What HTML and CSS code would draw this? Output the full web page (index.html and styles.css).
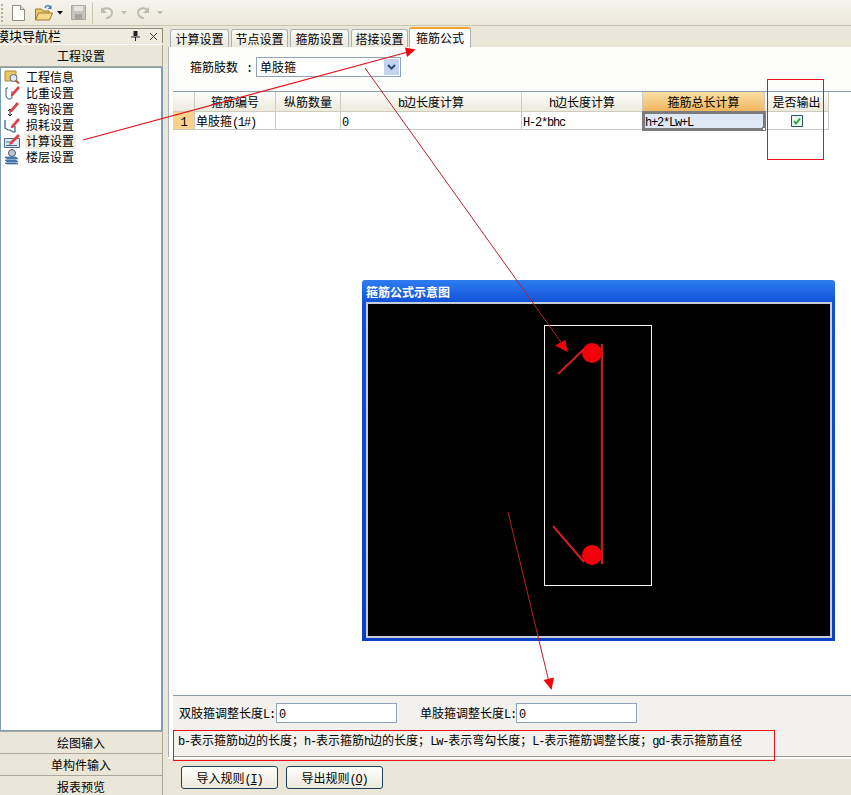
FILE: index.html
```html
<!DOCTYPE html>
<html lang="zh">
<head>
<meta charset="utf-8">
<title>箍筋公式</title>
<link rel="stylesheet" href="styles.css">
</head>
<body>
<div class="app">
  <header class="toolbar">
    <span class="grip"></span>
    <svg class="tool t-new" width="16" height="18" viewBox="0 0 16 18"><path d="M2.500 1.500h8l4 4v11h-12z" fill="#fdfdf8" stroke="#8e8e86"/><path d="M10.500 1.500v4h4" fill="#dcdcd0" stroke="#8e8e86"/></svg>
    <svg class="tool t-open" width="20" height="18" viewBox="0 0 20 18"><path d="M1.500 16V5h6l1.500 2h6v2" fill="#e9c66c" stroke="#9a7a30"/><path d="M1.500 16l3-7h14l-3 7z" fill="#f4d98a" stroke="#9a7a30"/><path d="M11 4c1-3 4-3 5-1" fill="none" stroke="#3f7fbf" stroke-width="1.500"/><path d="M17.500 1v4h-4z" fill="#3f7fbf"/></svg>
    <svg class="tool t-caret" width="6" height="4" viewBox="0 0 6 4"><path d="M0 0h6L3 3.500z" fill="#111"/></svg>
    <svg class="tool t-save" width="15" height="15" viewBox="0 0 15 15"><path d="M.5.500h14v14H.5z" fill="#c4c4bc" stroke="#a8a8a0"/><path d="M3 1h9v5H3z" fill="#e6e6e0"/><path d="M4 9h7v5H4z" fill="#a4a49c"/></svg>
    <span class="tool-sep"></span>
    <svg class="tool t-undo" width="14" height="14" viewBox="0 0 14 14"><path d="M2 4c4-3 10-2 10 3 0 3-3 5-6 5" fill="none" stroke="#bcbcb2" stroke-width="2"/><path d="M1 1v6h6z" fill="#bcbcb2"/></svg>
    <svg class="tool t-caret2" width="6" height="4" viewBox="0 0 6 4"><path d="M0 0h6L3 3.500z" fill="#bcbcb2"/></svg>
    <svg class="tool t-redo" width="14" height="14" viewBox="0 0 14 14"><path d="M12 4C8 1 2 2 2 7c0 3 3 5 6 5" fill="none" stroke="#bcbcb2" stroke-width="2"/><path d="M13 1v6H7z" fill="#bcbcb2"/></svg>
    <svg class="tool t-caret2" width="6" height="4" viewBox="0 0 6 4"><path d="M0 0h6L3 3.500z" fill="#bcbcb2"/></svg>
  </header>

  <div class="main">
    <aside class="nav">
      <div class="nav-title">
        <span class="nav-title-text">模块导航栏</span>
        <svg class="pin" width="9" height="10" viewBox="0 0 9 10"><path d="M2.500 0h4v5h-4zM0 5.500h9v1H0zM4 6h1v4H4z" fill="#222"/></svg>
        <svg class="close" width="9" height="9" viewBox="0 0 9 9"><path d="M1 1l7 7M8 1L1 8" stroke="#333" fill="none"/></svg>
      </div>
      <div class="nav-head">工程设置</div>
      <ul class="nav-list">
        <li class="nav-item">
          <svg width="16" height="16" viewBox="0 0 16 16"><path d="M1 2h11v10H1z" fill="#e8c866" stroke="#a88a3a"/><circle cx="9.500" cy="9" r="3.500" fill="#dfe8f0" stroke="#667"/><path d="M12 11.500l3 3" stroke="#a6622a" stroke-width="2"/></svg>
          <span>工程信息</span>
        </li>
        <li class="nav-item">
          <svg width="16" height="16" viewBox="0 0 16 16"><path d="M4 3H2v7c0 3 2 4 3 4M8 6v6c0 2-2 2-3 2" fill="none" stroke="#2a5a8a"/><path d="M7 9l7-8 2 2-7 8-2 0z" fill="#d8444a"/></svg>
          <span>比重设置</span>
        </li>
        <li class="nav-item">
          <svg width="16" height="16" viewBox="0 0 16 16"><path d="M6 9v6M4 10l2-2 2 2M4 13l2 2 2-2" fill="none" stroke="#223"/><path d="M6 9l7-8 2 2-7 8-2 0z" fill="#d8444a"/></svg>
          <span>弯钩设置</span>
        </li>
        <li class="nav-item">
          <svg width="16" height="16" viewBox="0 0 16 16"><path d="M1 3v8l3 2h2l3 2h2V9" fill="none" stroke="#2a5a8a" stroke-width="1.200"/><path d="M7 9l7-8 2 2-7 8-2 0z" fill="#d8444a"/></svg>
          <span>损耗设置</span>
        </li>
        <li class="nav-item nav-item-on">
          <svg width="16" height="16" viewBox="0 0 16 16"><path d="M.5 5.500h15v9H.5z" fill="#dce8f4" stroke="#4a6a8a"/><path d="M2 9h4M2 12.500h11" stroke="#4a6a8a"/><path d="M6 9l8-8 2 2-8 8-3 1z" fill="#d8444a"/></svg>
          <span>计算设置</span>
        </li>
        <li class="nav-item">
          <svg width="16" height="16" viewBox="0 0 16 16"><path d="M1 8h11l2 2H3zM1 11h11l2 2H3zM1 14h11l2 1H3z" fill="#4a86c4" stroke="#2a5a8a" stroke-width=".6"/><circle cx="8" cy="4" r="3.500" fill="#b8c8dc" stroke="#556"/></svg>
          <span>楼层设置</span>
        </li>
      </ul>
      <div class="nav-btn">绘图输入</div>
      <div class="nav-btn">单构件输入</div>
      <div class="nav-btn">报表预览</div>
    </aside>

    <section class="content">
      <nav class="tabs">
        <span class="tab tab-w59">计算设置</span>
        <span class="tab tab-w57">节点设置</span>
        <span class="tab tab-w59">箍筋设置</span>
        <span class="tab tab-w57">搭接设置</span>
        <span class="tab tab-on">箍筋公式</span>
      </nav>
      <div class="panel">
        <div class="filter">
          <span class="filter-label">箍筋肢数<span class="lat colon">:</span></span>
          <div class="combo">
            <span class="combo-text">单肢箍</span>
            <span class="combo-btn"><svg width="9" height="6" viewBox="0 0 9 6"><path d="M1 1l3.500 3.500L8 1" fill="none" stroke="#2d4a78" stroke-width="2"/></svg></span>
          </div>
        </div>
        <div class="grid-pane">
          <div class="sheet">
            <div class="th"></div>
            <div class="th">箍筋编号</div>
            <div class="th">纵筋数量</div>
            <div class="th"><span class="lat">b</span>边长度计算</div>
            <div class="th"><span class="lat">h</span>边长度计算</div>
            <div class="th th-on">箍筋总长计算</div>
            <div class="th">是否输出</div>
            <div class="td td-idx"><span class="lat">1</span></div>
            <div class="td">单肢箍<span class="lat">(1#)</span></div>
            <div class="td"></div>
            <div class="td"><span class="lat">0</span></div>
            <div class="td"><span class="lat">H-2*bhc</span></div>
            <div class="td td-sel"><span class="lat">h+2*Lw+L</span><i class="handle"></i></div>
            <div class="td td-check">
              <svg width="12" height="12" viewBox="0 0 12 12"><path d="M.5.500h11v11H.5z" fill="#eef3ee" stroke="#23586a"/><path d="M3 6l2 2.500L9 3.500" fill="none" stroke="#2aa63a" stroke-width="2"/></svg>
            </div>
          </div>
        </div>
        <div class="bottom">
          <div class="fields">
            <label class="field-label field-a">双肢箍调整长度<span class="lat">L:</span></label>
            <span class="input"><span class="lat">0</span></span>
            <label class="field-label field-b">单肢箍调整长度<span class="lat">L:</span></label>
            <span class="input"><span class="lat">0</span></span>
          </div>
          <p class="legend"><span class="lat">b-</span>表示箍筋<span class="lat">b</span>边的长度；<span class="lat">h-</span>表示箍筋<span class="lat">h</span>边的长度；<span class="lat">Lw-</span>表示弯勾长度；<span class="lat">L-</span>表示箍筋调整长度；<span class="lat">gd-</span>表示箍筋直径</p>
        </div>
      </div>
      <footer class="actions">
        <span class="btn">导入规则<span class="lat">(<u>I</u>)</span></span>
        <span class="btn">导出规则<span class="lat">(<u>O</u>)</span></span>
      </footer>
    </section>
  </div>

  <div class="dialog">
    <div class="dialog-title">箍筋公式示意图</div>
    <svg class="dialog-canvas" width="462" height="332" viewBox="0 0 462 332">
      <rect x="176.500" y="21.500" width="107" height="260" fill="none" stroke="#f4f4f4"/>
      <path d="M234 40v220" stroke="#b02226" stroke-width="2.500"/>
      <circle cx="224" cy="49" r="10" fill="#f4000c"/>
      <circle cx="224" cy="251" r="10" fill="#f4000c"/>
      <path d="M190 70l26-25M185 222l31 36" stroke="#d31c26" stroke-width="2"/>
    </svg>
  </div>

  <svg class="notes" width="851" height="795" viewBox="0 0 851 795">
    <path d="M83 140L408 52" stroke="#e8101c" stroke-width="1.200" fill="none"/>
    <path d="M415.500 49.500L405 47.500 407 57z" fill="#f4000c"/>
    <path d="M365 68L563 345" stroke="#b8202a" fill="none"/>
    <path d="M555 345.500L565.500 340 567.500 352z" fill="#f4000c"/>
    <path d="M508 512L549 682" stroke="#c01c26" fill="none"/>
    <path d="M551.500 690L543.500 680 554 677.500z" fill="#f4000c"/>
    <rect x="767.500" y="79.500" width="56" height="80" fill="none" stroke="#e8141c"/>
    <rect x="173.500" y="730.500" width="601" height="30" fill="none" stroke="#f0101c"/>
  </svg>
</div>
</body>
</html>
```
FILE: styles.css
```css
* { box-sizing: border-box; }
html, body { margin: 0; padding: 0; }
body {
  width: 851px;
  height: 795px;
  overflow: hidden;
  background: #ebe7d8;
  color: #000;
  font: 12px/16px "Noto Sans CJK SC", sans-serif;
}
.lat { font-family: "Liberation Mono", monospace; font-size: 12px; letter-spacing: -1.2px; }
.app { position: relative; width: 851px; height: 795px; display: flex; flex-direction: column; }

.toolbar {
  height: 26px;
  flex: none;
  display: flex;
  align-items: center;
  background: linear-gradient(#f6f4ec, #ebe8da);
  border-bottom: 1px solid #c9c6b6;
}
.grip { width: 2px; height: 18px; margin-left: 1px; border-left: 2px dotted #b5b2a4; }
.tool { display: block; flex: none; }
.t-new { margin-left: 7px; }
.t-open { margin-left: 8px; }
.t-caret { margin-left: 3px; }
.t-save { margin-left: 8px; }
.tool-sep { width: 1px; height: 22px; margin-left: 6px; background: #c9c6b6; }
.t-undo { margin-left: 7px; }
.t-caret2 { margin-left: 7px; }
.t-redo { margin-left: 9px; }

.main { height: 769px; flex: none; display: flex; overflow: hidden; }

.nav { width: 163px; flex: none; display: flex; flex-direction: column; background: #ebe7d8; padding-top: 2px; }
.nav-title {
  height: 15px;
  flex: none;
  display: flex;
  align-items: center;
  background: #efecdf;
  border-top: 1px solid #8f8c7c;
  border-right: 1px solid #8f8c7c;
  overflow: hidden;
}
.nav-title-text { margin-left: -4px; font-size: 13px; line-height: 14px; flex: 1; white-space: nowrap; }
.pin { margin-right: 9px; }
.close { margin-right: 4px; }
.nav-head {
  height: 23px;
  flex: none;
  margin-top: 1px;
  line-height: 21px;
  text-align: center;
  background: #ebe7d8;
  border-top: 1px solid #fff;
  border-right: 1px solid #aca899;
  border-bottom: 1px solid #aca899;
}
.nav-list {
  height: 664px;
  flex: none;
  margin: 0;
  padding: 1px 0 0 3px;
  list-style: none;
  background: #fff;
  border: 1px solid #7f9db9;
  border-right-width: 2px;
}
.nav-item { height: 16px; display: flex; align-items: center; gap: 5px; }
.nav-item span { padding: 0 2px 0 1px; }
.nav-item-on span { background: #f1efe2; }
.nav-btn {
  height: 22px;
  flex: none;
  line-height: 22px;
  text-align: center;
  border-top: 1px solid #aca899;
  border-right: 1px solid #aca899;
  background: #ebe7d8;
}

.content { flex: 1; min-width: 0; margin-left: 5px; display: flex; flex-direction: column; }
.tabs { height: 21px; flex: none; margin-top: 0; padding-left: 2px; display: flex; align-items: flex-end; gap: 2px; }
.tab {
  height: 18px;
  text-align: center;
  line-height: 17px;
  background: linear-gradient(#fbfaf5, #ece9dc);
  border: 1px solid #a9b2b8;
  border-bottom: 0;
  border-radius: 3px 3px 0 0;
}
.tab-w59 { width: 59px; }
.tab-w57 { width: 57px; }
.tab-on {
  width: 62px;
  height: 20px;
  margin-left: -1px;
  line-height: 17px;
  background: #fcfcfc;
  border-top: 2px solid #efa22e;
}

.panel { height: 710px; flex: none; display: flex; flex-direction: column; background: #fdfdfc; border-left: 1px solid #a9b2b8; }
.filter { height: 44px; flex: none; padding: 10px 0 0 21px; display: flex; align-items: flex-start; }
.filter-label { width: 66px; line-height: 20px; white-space: nowrap; }
.colon { margin-left: 8px; }
.combo { width: 145px; height: 20px; display: flex; align-items: center; background: #fff; border: 1px solid #8ea4b8; padding: 1px; }
.combo-text { flex: 1; padding-left: 2px; }
.combo-btn { width: 15px; height: 16px; display: flex; align-items: center; justify-content: center; background: #c3d3ee; }

.grid-pane { flex: 1; min-height: 0; margin-left: 4px; background: #fff; border-top: 1px solid #8c9cac; }
.sheet { display: grid; width: 656px; grid-template-columns: 22px 81px 65px 181px 121px 122px 64px; grid-template-rows: 20px 18px; }
.th {
  text-align: center;
  line-height: 19px;
  background: linear-gradient(#fdfdfa, #eceadc);
  border-right: 1px solid #cfccbd;
  border-bottom: 1px solid #cfccbd;
}
.th-on { background: linear-gradient(#f9dfa6, #f1b65e); }
.td { padding-left: 1px; line-height: 17px; border-right: 1px solid #c8c8c8; border-bottom: 1px solid #c8c8c8; white-space: nowrap; }
.td-idx { text-align: center; padding-left: 0; background: #fbd28c; }
.td-sel { position: relative; background: #dfe8f5; outline: 3px solid #7c7c7c; outline-offset: -2px; z-index: 1; padding-left: 2px; }
.handle { position: absolute; right: -2px; bottom: -2px; width: 4px; height: 4px; background: #fff; border: 1px solid #7c7c7c; }
.td-check { display: flex; align-items: center; justify-content: center; }
.td-check svg { display: block; }

.bottom { height: 62px; flex: none; margin-left: 4px; background: #f3f1ed; border-top: 1px solid #8c9cac; border-bottom: 1px solid #9a9a94; }
.fields { height: 36px; padding: 7px 0 0 6px; display: flex; align-items: flex-start; }
.field-label { line-height: 20px; white-space: nowrap; }
.field-a { width: 97px; }
.field-b { width: 96px; margin-left: 23px; }
.input { width: 121px; height: 20px; line-height: 17px; padding-left: 2px; background: #fff; border: 1px solid #8ea4b8; }
.legend { margin: 0 0 0 5px; line-height: 16px; white-space: nowrap; }

.actions { height: 38px; flex: none; padding: 7px 0 0 13px; display: flex; gap: 8px; background: #ebe7d8; border-top: 2px solid #fff; }
.btn {
  width: 97px;
  height: 23px;
  text-align: center;
  line-height: 21px;
  background: linear-gradient(#fefefc, #ece9dc);
  border: 1px solid #1e3f5c;
  border-radius: 3px;
}

.dialog {
  position: absolute;
  left: 362px;
  top: 280px;
  width: 473px;
  height: 361px;
  padding: 0 5px 5px 6px;
  background: linear-gradient(#2f7cf0, #0e50d8 24px, #0b3fc4);
  border-radius: 3px 3px 0 0;
  display: flex;
  flex-direction: column;
}
.dialog-title { height: 24px; padding-top: 3px; margin-left: -2px; line-height: 18px; color: #fff; font-weight: 700; }
.dialog-canvas { display: block; background: #000; outline: 2px solid #c4cdd8; outline-offset: 0; }

.notes { position: absolute; left: 0; top: 0; pointer-events: none; }
```
